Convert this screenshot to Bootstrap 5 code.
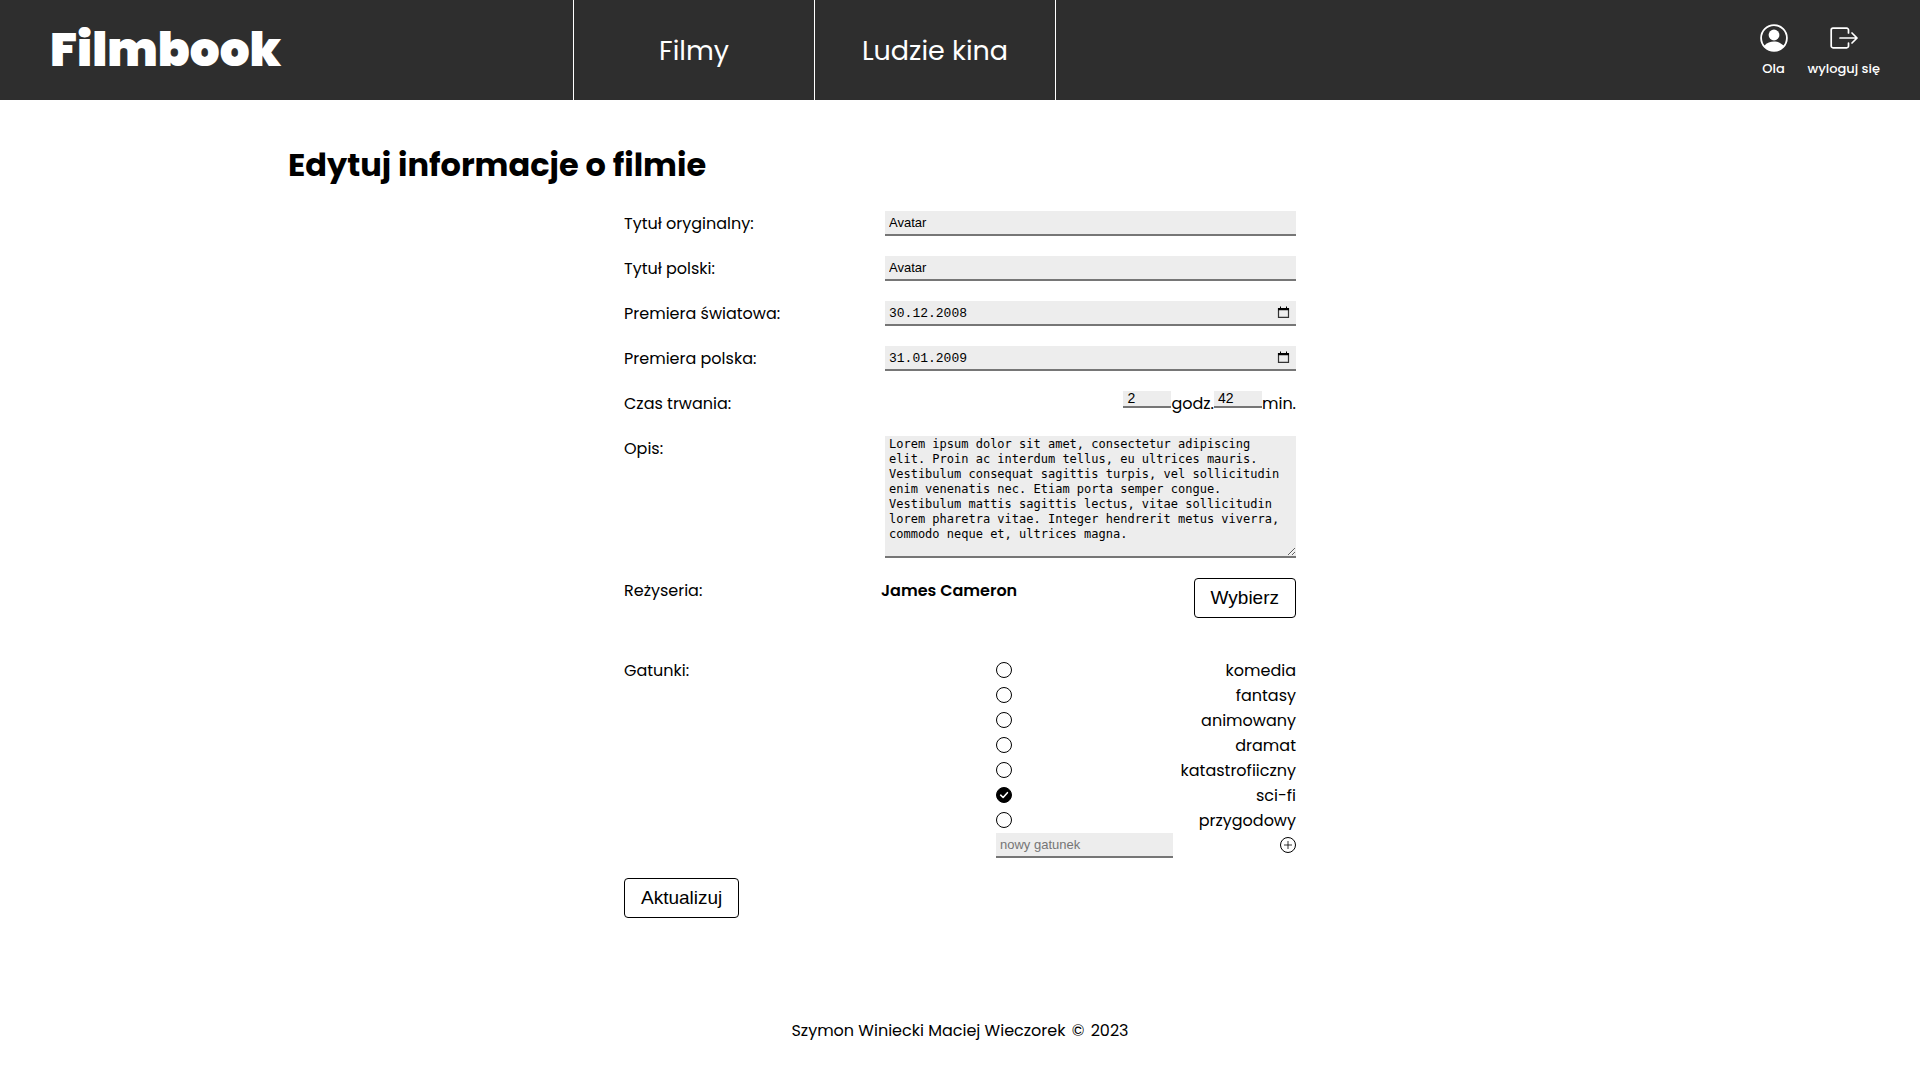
<!DOCTYPE html>
<html lang="pl">
<head>
<meta charset="utf-8">
<meta name="viewport" content="width=device-width, initial-scale=1">
<title>Filmbook</title>
<link href="https://cdn.jsdelivr.net/npm/bootstrap@5.3.0/dist/css/bootstrap.min.css" rel="stylesheet">
<style>
body { font-family: Poppins, Inter, "Noto Sans", sans-serif; font-size: 16px; line-height: 25px; color: #000; background: #fff; }
a { color: inherit; text-decoration: none; }
.site-header { background: #2e2e2e; color: #fff; min-height: 100px; }
.brand-cell { width: 573px; padding-left: 50px; }
.brand-link { font-size: 47px; line-height: 60px; font-weight: 900; }
.main-nav { border-left: 1px solid #fff; }
.main-nav a { width: 241px; border-right: 1px solid #fff; font-size: 27px; }
.user-nav { padding-right: 40px; gap: 20px; font-size: 13px; line-height: 20px; font-weight: 500; }
.user-nav a { padding-top: 3px; }
.user-nav svg { width: 28px; height: 28px; margin-bottom: 7px; }
.page-main { width: 70%; padding-top: 45px; }
.page-title { font-size: 32px; line-height: 40px; font-weight: 700; margin-bottom: 26px; }
.film-form { width: 50%; gap: 20px; }
.field-box { width: 411px; }
.field-input { display: block; width: 100%; height: 25px; border: 0; border-bottom: 2px solid #767676; border-radius: 0; background: #ededed; color: #000; font: 13px/21px "Liberation Sans", Arial, sans-serif; padding: 0 4px 1px; }
.field-input::placeholder { color: #757575; }
.field-date { font: 13px/21px "Liberation Mono", monospace; padding: 1px 4px 0; }
.date-pick { right: 6px; top: 5px; }
.field-short { width: 48px; height: 17px; font-size: 14px; line-height: 14px; }
.field-area { height: 122px; font: 12px/15px "DejaVu Sans Mono", monospace; padding: 1px 4px; resize: both; }
.btn-line { height: 40px; border: 1px solid #000; border-radius: 4px; background: #fff; color: #000; font: 19px/22px "Liberation Sans", Arial, sans-serif; padding: 0 16px; }
.director-row { margin-bottom: 20px; }
.director-box { width: 415px; }
.genre-box { width: 300px; }
.genre-check { appearance: none; width: 16px; height: 16px; margin: 0 0 1px; border: 1px solid #000; border-radius: 50%; background: #fff; }
.genre-check:checked { background: #000 url("data:image/svg+xml,%3Csvg xmlns='http://www.w3.org/2000/svg' viewBox='0 0 14 14'%3E%3Cpath d='M3.7 7.2 6.1 9.5 10.4 4.7' fill='none' stroke='white' stroke-width='1.6' stroke-linecap='round' stroke-linejoin='round'/%3E%3C/svg%3E") center / 14px 14px no-repeat; }
.genre-new { width: 177px; }
.icon-btn { border: 0; background: none; padding: 0 0 1px; line-height: 0; color: #000; }
.site-footer { padding: 100px 0 38px; }
.copy-sign { padding: 0 2px; }
</style>
<script src="https://cdn.jsdelivr.net/npm/bootstrap@5.3.0/dist/js/bootstrap.bundle.min.js" defer></script>
</head>
<body>
<header class="site-header d-flex align-items-stretch">
  <div class="brand-cell d-flex align-items-center"><a class="brand-link" href="#">Filmbook</a></div>
  <nav class="main-nav d-flex" aria-label="Menu">
    <a class="d-flex align-items-center justify-content-center" href="#">Filmy</a>
    <a class="d-flex align-items-center justify-content-center" href="#">Ludzie kina</a>
  </nav>
  <div class="user-nav d-flex align-items-center ms-auto">
    <a class="d-flex flex-column align-items-center" href="#">
      <svg viewBox="0 0 28 28" aria-hidden="true"><defs><clipPath id="disc"><circle cx="14" cy="14" r="13"/></clipPath></defs><circle cx="14" cy="14" r="12.9" fill="none" stroke="#fff" stroke-width="1.8"/><circle cx="14" cy="11" r="5.4" fill="#fff"/><path d="M4 28V22C7 18.8 10.500 17.600 14 17.600S21 18.800 24 22V28Z" fill="#fff" clip-path="url(#disc)"/></svg>
      <span>Ola</span>
    </a>
    <a class="d-flex flex-column align-items-center" href="#">
      <svg viewBox="0 0 28 28" fill="none" stroke="#fff" stroke-width="1.700" stroke-linecap="round" stroke-linejoin="round" aria-hidden="true"><path d="M18.500 9V6a1.800 1.800 0 0 0-1.800-1.800H3A1.800 1.800 0 0 0 1.200 6v16A1.800 1.800 0 0 0 3 23.800h13.700a1.800 1.800 0 0 0 1.800-1.800v-3M10 14h17M22 9l5 5-5 5"/></svg>
      <span>wyloguj się</span>
    </a>
  </div>
</header>
<main class="page-main mx-auto">
  <h1 class="page-title">Edytuj informacje o filmie</h1>
  <form class="film-form d-flex flex-column mx-auto">
    <div class="d-flex justify-content-between">
      <label for="org">Tytuł oryginalny:</label>
      <div class="field-box"><input class="field-input" id="org" type="text" value="Avatar"></div>
    </div>
    <div class="d-flex justify-content-between">
      <label for="pol">Tytuł polski:</label>
      <div class="field-box"><input class="field-input" id="pol" type="text" value="Avatar"></div>
    </div>
    <div class="d-flex justify-content-between">
      <label for="world">Premiera światowa:</label>
      <div class="field-box position-relative">
        <input class="field-input field-date" id="world" type="text" inputmode="numeric" value="30.12.2008">
        <button class="icon-btn date-pick position-absolute" type="button" aria-label="Wybierz datę"><svg width="13" height="13" viewBox="0 0 13 13"><path d="M1.500 2.500h10v8.800h-10z" fill="none" stroke="#333" stroke-width="1.200"/><path d="M1 2h11v2.300H1zM3 .5h1V2H3zM9 .5h1V2H9z"/></svg></button>
      </div>
    </div>
    <div class="d-flex justify-content-between">
      <label for="local">Premiera polska:</label>
      <div class="field-box position-relative">
        <input class="field-input field-date" id="local" type="text" inputmode="numeric" value="31.01.2009">
        <button class="icon-btn date-pick position-absolute" type="button" aria-label="Wybierz datę"><svg width="13" height="13" viewBox="0 0 13 13"><path d="M1.500 2.500h10v8.800h-10z" fill="none" stroke="#333" stroke-width="1.200"/><path d="M1 2h11v2.300H1zM3 .5h1V2H3zM9 .5h1V2H9z"/></svg></button>
      </div>
    </div>
    <div class="d-flex justify-content-between">
      <label for="hours">Czas trwania:</label>
      <div class="d-flex">
        <input class="field-input field-short" id="hours" type="text" inputmode="numeric" value="2"><label for="hours">godz.</label>
        <input class="field-input field-short" id="minutes" type="text" inputmode="numeric" value="42"><label for="minutes">min.</label>
      </div>
    </div>
    <div class="d-flex justify-content-between">
      <label for="desc">Opis:</label>
      <div class="field-box"><textarea class="field-input field-area" id="desc">Lorem ipsum dolor sit amet, consectetur adipiscing elit. Proin ac interdum tellus, eu ultrices mauris. Vestibulum consequat sagittis turpis, vel sollicitudin enim venenatis nec. Etiam porta semper congue. Vestibulum mattis sagittis lectus, vitae sollicitudin lorem pharetra vitae. Integer hendrerit metus viverra, commodo neque et, ultrices magna.</textarea></div>
    </div>
    <div class="director-row d-flex justify-content-between">
      <span>Reżyseria:</span>
      <div class="director-box d-flex justify-content-between">
        <span class="fw-semibold">James Cameron</span>
        <button class="btn-line" type="button">Wybierz</button>
      </div>
    </div>
    <div class="d-flex justify-content-between">
      <span>Gatunki:</span>
      <div class="genre-box">
        <div class="d-flex justify-content-between align-items-center"><input class="genre-check" type="checkbox" id="g1"><label for="g1">komedia</label></div>
        <div class="d-flex justify-content-between align-items-center"><input class="genre-check" type="checkbox" id="g2"><label for="g2">fantasy</label></div>
        <div class="d-flex justify-content-between align-items-center"><input class="genre-check" type="checkbox" id="g3"><label for="g3">animowany</label></div>
        <div class="d-flex justify-content-between align-items-center"><input class="genre-check" type="checkbox" id="g4"><label for="g4">dramat</label></div>
        <div class="d-flex justify-content-between align-items-center"><input class="genre-check" type="checkbox" id="g5"><label for="g5">katastrofiiczny</label></div>
        <div class="d-flex justify-content-between align-items-center"><input class="genre-check" type="checkbox" id="g6" checked><label for="g6">sci-fi</label></div>
        <div class="d-flex justify-content-between align-items-center"><input class="genre-check" type="checkbox" id="g7"><label for="g7">przygodowy</label></div>
        <div class="d-flex justify-content-between align-items-center">
          <input class="field-input genre-new" type="text" placeholder="nowy gatunek" aria-label="nowy gatunek">
          <button class="icon-btn" type="button" aria-label="Dodaj gatunek"><svg width="16" height="16" viewBox="0 0 16 16" fill="none" stroke="#000"><circle cx="8" cy="8" r="7.500"/><path d="M8 4v8M4 8h8" stroke-width=".8"/></svg></button>
        </div>
      </div>
    </div>
    <div><button class="btn-line" type="submit">Aktualizuj</button></div>
  </form>
</main>
<footer class="site-footer text-center">Szymon Winiecki Maciej Wieczorek <span class="copy-sign">©</span> 2023</footer>
</body>
</html>
